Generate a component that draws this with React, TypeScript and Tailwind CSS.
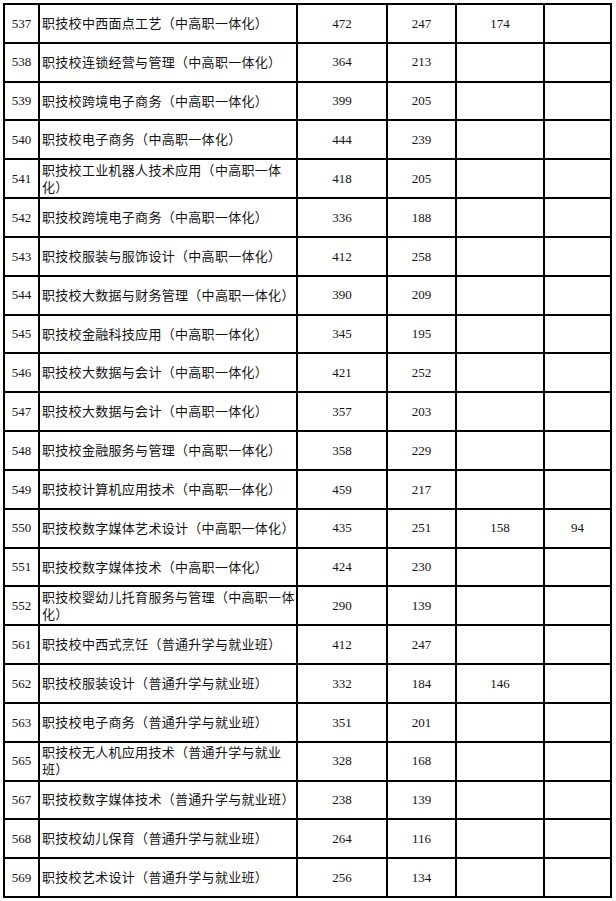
type Row = {
  no: string;
  name: string;
  a: string;
  b: string;
  c?: string;
  d?: string;
};

const rows: Row[] = [
  { no: "537", name: "职技校中西面点工艺（中高职一体化）", a: "472", b: "247", c: "174" },
  { no: "538", name: "职技校连锁经营与管理（中高职一体化）", a: "364", b: "213" },
  { no: "539", name: "职技校跨境电子商务（中高职一体化）", a: "399", b: "205" },
  { no: "540", name: "职技校电子商务（中高职一体化）", a: "444", b: "239" },
  { no: "541", name: "职技校工业机器人技术应用（中高职一体化）", a: "418", b: "205" },
  { no: "542", name: "职技校跨境电子商务（中高职一体化）", a: "336", b: "188" },
  { no: "543", name: "职技校服装与服饰设计（中高职一体化）", a: "412", b: "258" },
  { no: "544", name: "职技校大数据与财务管理（中高职一体化）", a: "390", b: "209" },
  { no: "545", name: "职技校金融科技应用（中高职一体化）", a: "345", b: "195" },
  { no: "546", name: "职技校大数据与会计（中高职一体化）", a: "421", b: "252" },
  { no: "547", name: "职技校大数据与会计（中高职一体化）", a: "357", b: "203" },
  { no: "548", name: "职技校金融服务与管理（中高职一体化）", a: "358", b: "229" },
  { no: "549", name: "职技校计算机应用技术（中高职一体化）", a: "459", b: "217" },
  { no: "550", name: "职技校数字媒体艺术设计（中高职一体化）", a: "435", b: "251", c: "158", d: "94" },
  { no: "551", name: "职技校数字媒体技术（中高职一体化）", a: "424", b: "230" },
  { no: "552", name: "职技校婴幼儿托育服务与管理（中高职一体化）", a: "290", b: "139" },
  { no: "561", name: "职技校中西式烹饪（普通升学与就业班）", a: "412", b: "247" },
  { no: "562", name: "职技校服装设计（普通升学与就业班）", a: "332", b: "184", c: "146" },
  { no: "563", name: "职技校电子商务（普通升学与就业班）", a: "351", b: "201" },
  { no: "565", name: "职技校无人机应用技术（普通升学与就业班）", a: "328", b: "168" },
  { no: "567", name: "职技校数字媒体技术（普通升学与就业班）", a: "238", b: "139" },
  { no: "568", name: "职技校幼儿保育（普通升学与就业班）", a: "264", b: "116" },
  { no: "569", name: "职技校艺术设计（普通升学与就业班）", a: "256", b: "134" },
];

const cell = "flex items-center justify-center border-r-2 border-b-2 border-black";

export default function App() {
  return (
    <div className="min-h-[901px] w-[616px] bg-white pl-[3px] pt-[3px] text-[13px] text-[#141414] [font-family:'Liberation_Serif','Noto_Sans_CJK_SC',serif]">
      <div className="grid w-[609px] grid-cols-[35px_258px_90px_69px_88px_67px] auto-rows-[38.83px] border-l-2 border-t-2 border-black">
        {rows.map((r) => (
          <div key={r.no} className="contents">
            <div className={cell}>{r.no}</div>
            <div className="flex items-center border-r-2 border-b-2 border-black pl-[2px] pr-[1px] leading-[17px] tracking-[0.3px]">
              <span>{r.name}</span>
            </div>
            <div className={cell}>{r.a}</div>
            <div className={cell}>{r.b}</div>
            <div className={cell}>{r.c ?? ""}</div>
            <div className={cell}>{r.d ?? ""}</div>
          </div>
        ))}
      </div>
    </div>
  );
}
